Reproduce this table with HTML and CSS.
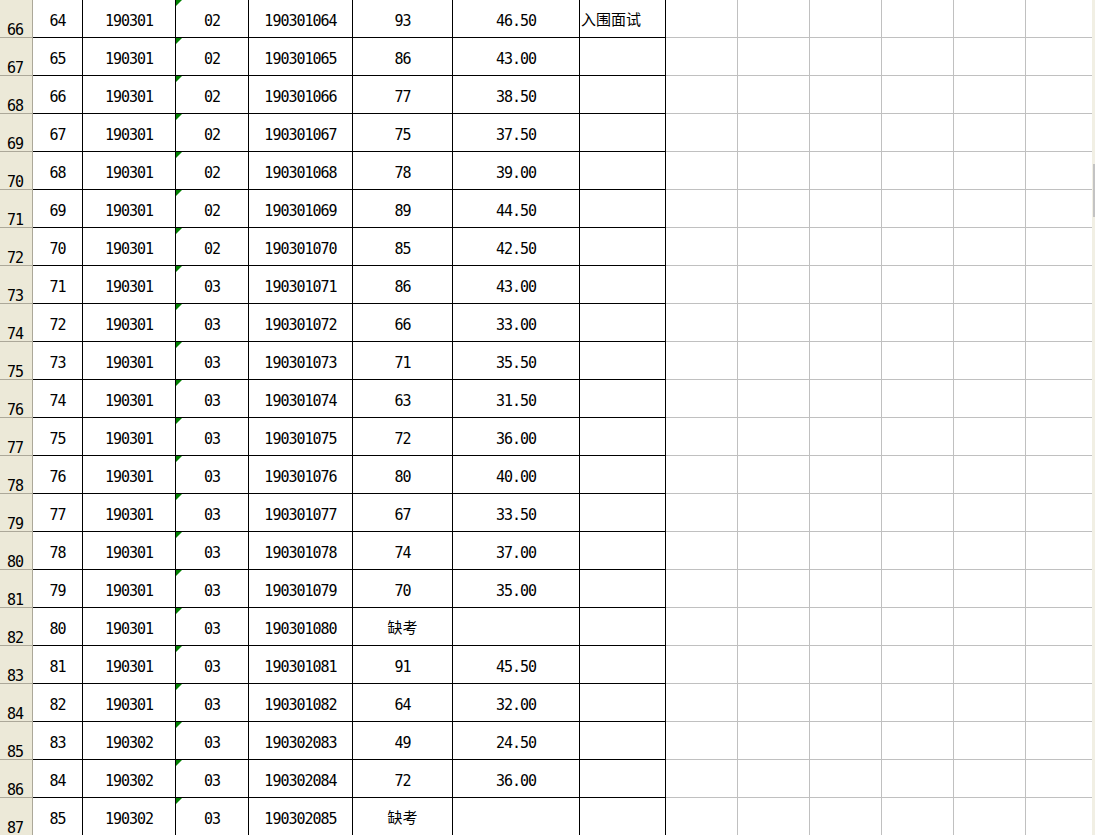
FILE: index.html
```html
<!DOCTYPE html>
<html lang="zh-CN">
<head>
<meta charset="utf-8">
<title>Sheet</title>
<link rel="stylesheet" href="styles.css">
</head>
<body>
<div class="window">
  <div class="sheet">
    <div class="row"><div class="rh">66</div><div class="c">64</div><div class="c">190301</div><div class="c cc">02</div><div class="c">190301064</div><div class="c">93</div><div class="c">46.50</div><div class="c g cjk">入围面试</div><div class="e"></div><div class="e"></div><div class="e"></div><div class="e"></div><div class="e"></div><div class="e last"></div></div>
    <div class="row"><div class="rh">67</div><div class="c">65</div><div class="c">190301</div><div class="c cc">02</div><div class="c">190301065</div><div class="c">86</div><div class="c">43.00</div><div class="c g"></div><div class="e"></div><div class="e"></div><div class="e"></div><div class="e"></div><div class="e"></div><div class="e last"></div></div>
    <div class="row"><div class="rh">68</div><div class="c">66</div><div class="c">190301</div><div class="c cc">02</div><div class="c">190301066</div><div class="c">77</div><div class="c">38.50</div><div class="c g"></div><div class="e"></div><div class="e"></div><div class="e"></div><div class="e"></div><div class="e"></div><div class="e last"></div></div>
    <div class="row"><div class="rh">69</div><div class="c">67</div><div class="c">190301</div><div class="c cc">02</div><div class="c">190301067</div><div class="c">75</div><div class="c">37.50</div><div class="c g"></div><div class="e"></div><div class="e"></div><div class="e"></div><div class="e"></div><div class="e"></div><div class="e last"></div></div>
    <div class="row"><div class="rh">70</div><div class="c">68</div><div class="c">190301</div><div class="c cc">02</div><div class="c">190301068</div><div class="c">78</div><div class="c">39.00</div><div class="c g"></div><div class="e"></div><div class="e"></div><div class="e"></div><div class="e"></div><div class="e"></div><div class="e last"></div></div>
    <div class="row"><div class="rh">71</div><div class="c">69</div><div class="c">190301</div><div class="c cc">02</div><div class="c">190301069</div><div class="c">89</div><div class="c">44.50</div><div class="c g"></div><div class="e"></div><div class="e"></div><div class="e"></div><div class="e"></div><div class="e"></div><div class="e last"></div></div>
    <div class="row"><div class="rh">72</div><div class="c">70</div><div class="c">190301</div><div class="c cc">02</div><div class="c">190301070</div><div class="c">85</div><div class="c">42.50</div><div class="c g"></div><div class="e"></div><div class="e"></div><div class="e"></div><div class="e"></div><div class="e"></div><div class="e last"></div></div>
    <div class="row"><div class="rh">73</div><div class="c">71</div><div class="c">190301</div><div class="c cc">03</div><div class="c">190301071</div><div class="c">86</div><div class="c">43.00</div><div class="c g"></div><div class="e"></div><div class="e"></div><div class="e"></div><div class="e"></div><div class="e"></div><div class="e last"></div></div>
    <div class="row"><div class="rh">74</div><div class="c">72</div><div class="c">190301</div><div class="c cc">03</div><div class="c">190301072</div><div class="c">66</div><div class="c">33.00</div><div class="c g"></div><div class="e"></div><div class="e"></div><div class="e"></div><div class="e"></div><div class="e"></div><div class="e last"></div></div>
    <div class="row"><div class="rh">75</div><div class="c">73</div><div class="c">190301</div><div class="c cc">03</div><div class="c">190301073</div><div class="c">71</div><div class="c">35.50</div><div class="c g"></div><div class="e"></div><div class="e"></div><div class="e"></div><div class="e"></div><div class="e"></div><div class="e last"></div></div>
    <div class="row"><div class="rh">76</div><div class="c">74</div><div class="c">190301</div><div class="c cc">03</div><div class="c">190301074</div><div class="c">63</div><div class="c">31.50</div><div class="c g"></div><div class="e"></div><div class="e"></div><div class="e"></div><div class="e"></div><div class="e"></div><div class="e last"></div></div>
    <div class="row"><div class="rh">77</div><div class="c">75</div><div class="c">190301</div><div class="c cc">03</div><div class="c">190301075</div><div class="c">72</div><div class="c">36.00</div><div class="c g"></div><div class="e"></div><div class="e"></div><div class="e"></div><div class="e"></div><div class="e"></div><div class="e last"></div></div>
    <div class="row"><div class="rh">78</div><div class="c">76</div><div class="c">190301</div><div class="c cc">03</div><div class="c">190301076</div><div class="c">80</div><div class="c">40.00</div><div class="c g"></div><div class="e"></div><div class="e"></div><div class="e"></div><div class="e"></div><div class="e"></div><div class="e last"></div></div>
    <div class="row"><div class="rh">79</div><div class="c">77</div><div class="c">190301</div><div class="c cc">03</div><div class="c">190301077</div><div class="c">67</div><div class="c">33.50</div><div class="c g"></div><div class="e"></div><div class="e"></div><div class="e"></div><div class="e"></div><div class="e"></div><div class="e last"></div></div>
    <div class="row"><div class="rh">80</div><div class="c">78</div><div class="c">190301</div><div class="c cc">03</div><div class="c">190301078</div><div class="c">74</div><div class="c">37.00</div><div class="c g"></div><div class="e"></div><div class="e"></div><div class="e"></div><div class="e"></div><div class="e"></div><div class="e last"></div></div>
    <div class="row"><div class="rh">81</div><div class="c">79</div><div class="c">190301</div><div class="c cc">03</div><div class="c">190301079</div><div class="c">70</div><div class="c">35.00</div><div class="c g"></div><div class="e"></div><div class="e"></div><div class="e"></div><div class="e"></div><div class="e"></div><div class="e last"></div></div>
    <div class="row"><div class="rh">82</div><div class="c">80</div><div class="c">190301</div><div class="c cc">03</div><div class="c">190301080</div><div class="c cjk">缺考</div><div class="c"></div><div class="c g"></div><div class="e"></div><div class="e"></div><div class="e"></div><div class="e"></div><div class="e"></div><div class="e last"></div></div>
    <div class="row"><div class="rh">83</div><div class="c">81</div><div class="c">190301</div><div class="c cc">03</div><div class="c">190301081</div><div class="c">91</div><div class="c">45.50</div><div class="c g"></div><div class="e"></div><div class="e"></div><div class="e"></div><div class="e"></div><div class="e"></div><div class="e last"></div></div>
    <div class="row"><div class="rh">84</div><div class="c">82</div><div class="c">190301</div><div class="c cc">03</div><div class="c">190301082</div><div class="c">64</div><div class="c">32.00</div><div class="c g"></div><div class="e"></div><div class="e"></div><div class="e"></div><div class="e"></div><div class="e"></div><div class="e last"></div></div>
    <div class="row"><div class="rh">85</div><div class="c">83</div><div class="c">190302</div><div class="c cc">03</div><div class="c">190302083</div><div class="c">49</div><div class="c">24.50</div><div class="c g"></div><div class="e"></div><div class="e"></div><div class="e"></div><div class="e"></div><div class="e"></div><div class="e last"></div></div>
    <div class="row"><div class="rh">86</div><div class="c">84</div><div class="c">190302</div><div class="c cc">03</div><div class="c">190302084</div><div class="c">72</div><div class="c">36.00</div><div class="c g"></div><div class="e"></div><div class="e"></div><div class="e"></div><div class="e"></div><div class="e"></div><div class="e last"></div></div>
    <div class="row"><div class="rh">87</div><div class="c">85</div><div class="c">190302</div><div class="c cc">03</div><div class="c">190302085</div><div class="c cjk">缺考</div><div class="c"></div><div class="c g"></div><div class="e"></div><div class="e"></div><div class="e"></div><div class="e"></div><div class="e"></div><div class="e last"></div></div>
  </div>
  <div class="scrollbar"><div class="thumb"></div></div>
</div>
</body>
</html>
```
FILE: styles.css
```css
* { box-sizing: border-box; }
html, body {
  margin: 0;
  padding: 0;
  background: #ffffff;
  overflow: hidden;
}
body {
  width: 1095px;
  height: 835px;
  font-family: "DejaVu Sans Mono", "Liberation Mono", monospace;
  font-size: 15px;
  color: #000;
}
.window {
  display: flex;
  width: 1095px;
  height: 835px;
  overflow: hidden;
}
.sheet {
  width: 1092px;
  display: flex;
  flex-direction: column;
}
.row {
  display: grid;
  grid-template-columns: 33px 50px 93px 73px 104px 100px 127px 86px 72px 72px 72px 72px 72px 66px;
  height: 38px;
  flex: none;
}
.rh {
  background: #ece9d8;
  border-right: 1px solid #aca899;
  border-bottom: 1px solid #aca899;
  padding: 24px 0 0 7px;
  line-height: 13px;
  letter-spacing: -1px;
  white-space: nowrap;
}
.c {
  position: relative;
  border-right: 1px solid #000;
  border-bottom: 1px solid #000;
  text-align: center;
  padding-top: 6px;
  line-height: 30px;
  letter-spacing: -1px;
  white-space: nowrap;
  overflow: hidden;
}
.c.cjk {
  font-family: "Noto Sans CJK SC", sans-serif;
  letter-spacing: 0;
  padding-top: 4px;
}
.g {
  text-align: left;
  padding-left: 1px;
}
.cc::before {
  content: "";
  position: absolute;
  top: 0;
  left: 0;
  width: 0;
  height: 0;
  border-top: 6px solid #008000;
  border-right: 6px solid transparent;
}
.e {
  border-right: 1px solid #c0c0c0;
  border-bottom: 1px solid #c0c0c0;
}
.e.last {
  border-right: none;
}
.scrollbar {
  width: 3px;
  height: 835px;
  background: #f1efe4;
  padding-left: 1px;
}
.thumb {
  margin-top: 164px;
  width: 2px;
  height: 53px;
  background: #c3c3c3;
}
```
